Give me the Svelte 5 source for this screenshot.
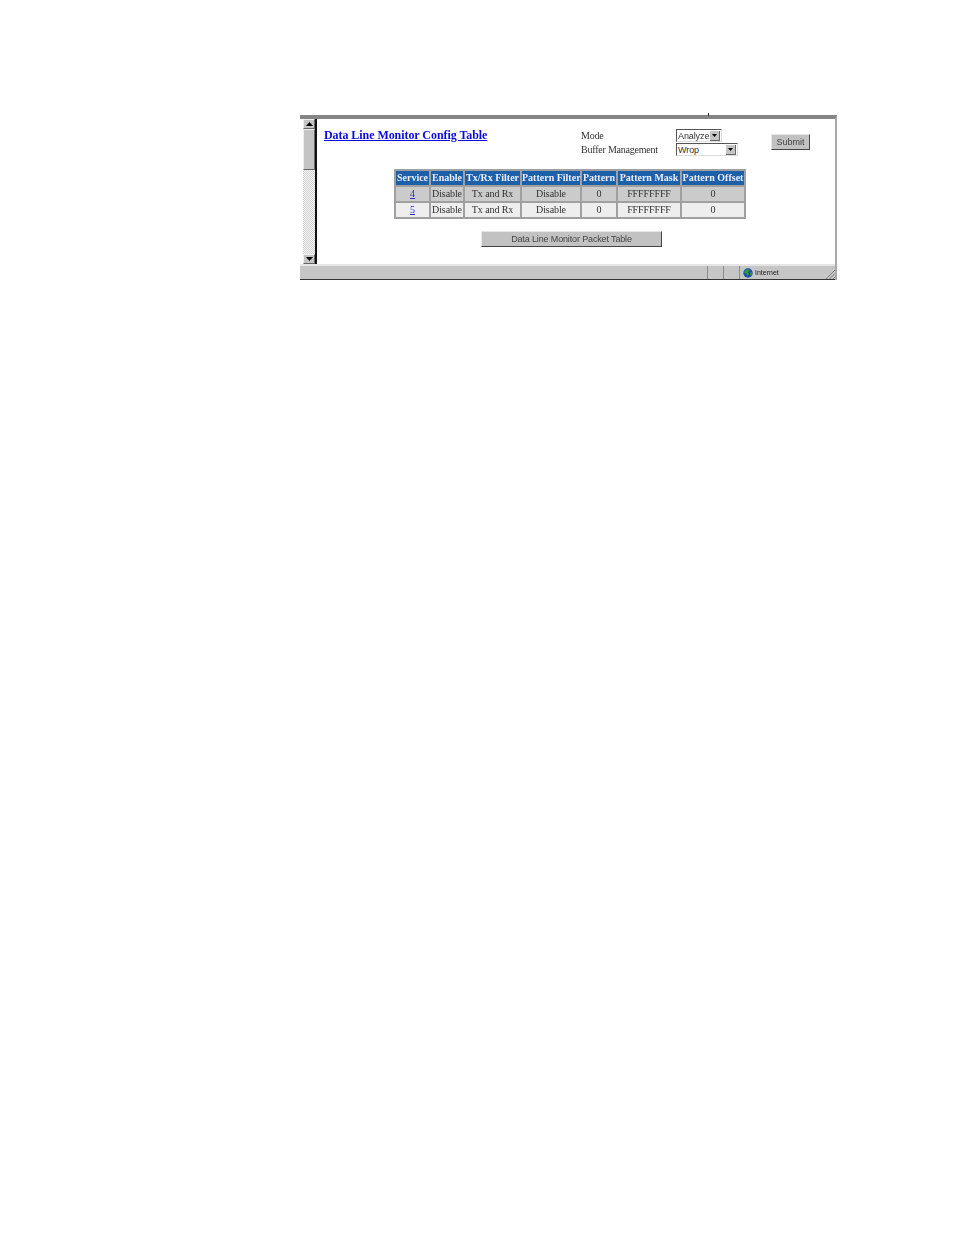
<script>
  const cols = [35, 34, 57, 60, 36, 64, 64];
  const heads = ["Service", "Enable", "Tx/Rx Filter", "Pattern Filter", "Pattern", "Pattern Mask", "Pattern Offset"];
  const rows = [
    { service: "4", cells: ["Disable", "Tx and Rx", "Disable", "0", "FFFFFFFF", "0"] },
    { service: "5", cells: ["Disable", "Tx and Rx", "Disable", "0", "FFFFFFFF", "0"] },
  ];
</script>

<div class="page">
  <div class="window">
    <span class="tick"></span>
    <div class="main">
      <div class="scroll">
        <div class="sbtn">
          <svg width="7" height="4" viewBox="0 0 7 4"><path d="M3.5 0 7 4H0z" fill="#000" /></svg>
        </div>
        <div class="thumb"></div>
        <div class="track"></div>
        <div class="sbtn">
          <svg width="7" height="4" viewBox="0 0 7 4"><path d="M0 0h7L3.500 4z" fill="#000" /></svg>
        </div>
      </div>

      <div class="content">
        <div class="top">
          <a class="title" href="#top">Data Line Monitor Config Table</a>
          <div class="labels">
            <div>Mode</div>
            <div>Buffer Management</div>
          </div>
          <div class="selects">
            <div class="select analyze">
              <span>Analyze</span>
              <i><svg width="5" height="3" viewBox="0 0 5 3"><path d="M0 0h5L2.500 3z" fill="#000" /></svg></i>
            </div>
            <div class="select wrap">
              <span>Wrop</span>
              <i><svg width="5" height="3" viewBox="0 0 5 3"><path d="M0 0h5L2.500 3z" fill="#000" /></svg></i>
            </div>
          </div>
          <button class="submit">Submit</button>
        </div>

        <table>
          <colgroup>
            {#each cols as w}
              <col style="width: {w}px" />
            {/each}
          </colgroup>
          <thead>
            <tr>
              {#each heads as h}
                <th>{h}</th>
              {/each}
            </tr>
          </thead>
          <tbody>
            {#each rows as row, i}
              <tr class={i % 2 ? "even" : "odd"}>
                <td><a href="#top">{row.service}</a></td>
                {#each row.cells as c}
                  <td>{c}</td>
                {/each}
              </tr>
            {/each}
          </tbody>
        </table>

        <button class="packet">Data Line Monitor Packet Table</button>
      </div>
    </div>

    <div class="status">
      <div class="st wide"></div>
      <div class="st small"></div>
      <div class="st small"></div>
      <div class="st zone">
        <svg width="10" height="10" viewBox="0 0 10 10">
          <circle cx="5" cy="5" r="4.700" fill="#1c4fa8" />
          <path d="M2 2.500 5 1l1.500 1.500L5 4.500 6 6 4.500 8.500 3.500 6 1 4.500zM7 5l2-1 .3 2L7.500 8z" fill="#2f9a35" />
        </svg>
        <span>Internet</span>
      </div>
      <svg class="grip" width="10" height="10" viewBox="0 0 10 10">
        <path d="M1 10 10 1M4.500 10 10 4.500M8 10l2-2" stroke="#7d7d7d" fill="none" />
      </svg>
    </div>
  </div>
</div>

<style>
  :global(body) {
    background: #fff;
  }
  .page {
    height: 1235px;
    box-sizing: border-box;
    padding: 115px 0 0 300px;
  }
  .window {
    position: relative;
    width: 537px;
    box-sizing: border-box;
    border-top: 4px solid #858585;
    border-right: 2px solid #a8a8a8;
    filter: blur(0.3px);
  }
  .tick {
    position: absolute;
    left: 408px;
    top: -6px;
    width: 1px;
    height: 3px;
    background: #222;
  }
  .main {
    display: flex;
    height: 145px;
  }
  .scroll {
    width: 12px;
    margin-left: 3px;
    display: flex;
    flex-direction: column;
    border-right: 2px solid #111;
  }
  .sbtn {
    height: 10px;
    display: flex;
    align-items: center;
    justify-content: center;
    background: #c4c4c4;
    border-top: 1px solid #eee;
    border-left: 1px solid #eee;
    border-right: 1px solid #666;
    border-bottom: 1px solid #666;
    box-sizing: border-box;
  }
  .thumb {
    height: 41px;
    background: #c4c4c4;
    border-top: 1px solid #eee;
    border-left: 1px solid #eee;
    border-right: 1px solid #666;
    border-bottom: 1px solid #666;
    box-sizing: border-box;
  }
  .track {
    flex: 1;
    background: repeating-conic-gradient(#d2d2d2 0 25%, #f4f4f4 0 50%) 0 0 / 2px 2px;
  }
  .content {
    flex: 1;
    padding-top: 10px;
    font-family: "Liberation Serif", serif;
    font-size: 10px;
    color: #333;
  }
  .top {
    display: flex;
    align-items: flex-start;
    padding-left: 7px;
  }
  .title {
    width: 257px;
    margin-top: -1px;
    font-size: 12px;
    line-height: 14px;
    font-weight: bold;
    letter-spacing: -0.06px;
    color: #0a0ae0;
  }
  .labels {
    width: 95px;
    line-height: 14px;
    letter-spacing: -0.22px;
  }
  .selects {
    width: 95px;
    display: flex;
    flex-direction: column;
    align-items: flex-start;
    gap: 1px;
  }
  .select {
    height: 13px;
    box-sizing: border-box;
    display: flex;
    justify-content: space-between;
    align-items: center;
    padding: 0 1px 0 1px;
    background: #fff;
    border-top: 1px solid #555;
    border-left: 1px solid #555;
    border-right: 1px solid #ddd;
    border-bottom: 1px solid #ddd;
    font-family: "Liberation Sans", sans-serif;
    font-size: 9px;
    letter-spacing: -0.1px;
  }
  .analyze {
    width: 46px;
  }
  .wrap {
    width: 62px;
  }
  .select i {
    width: 10px;
    height: 10px;
    display: flex;
    align-items: center;
    justify-content: center;
    background: #c4c4c4;
    border-right: 1px solid #666;
    border-bottom: 1px solid #666;
    box-sizing: border-box;
  }
  button {
    padding: 0;
    background: #c3c2c3;
    border-style: solid;
    border-width: 1px;
    border-color: #e6e6e6 #444 #444 #e6e6e6;
    font-family: "Liberation Sans", sans-serif;
    font-size: 9px;
    color: #444;
  }
  .submit {
    width: 39px;
    height: 16px;
    margin-top: 5px;
  }
  table {
    margin: 12px 0 0 77px;
    width: 350px;
    table-layout: fixed;
    border-collapse: collapse;
    text-align: center;
  }
  th {
    height: 16px;
    padding: 0 0 2px;
    box-sizing: border-box;
    background: #1c60aa;
    color: #eef;
    border: 2px solid #a0a0a0;
    font-size: 10px;
    white-space: nowrap;
  }
  td {
    height: 16px;
    padding: 0 0 2px;
    box-sizing: border-box;
    border: 2px solid #a0a0a0;
    white-space: nowrap;
    letter-spacing: -0.1px;
  }
  .odd td {
    background: #cbcbcb;
  }
  .even td {
    background: #eeeeee;
  }
  td a {
    color: #2a2ae0;
  }
  .packet {
    display: block;
    width: 181px;
    height: 16px;
    margin: 12px 0 0 164px;
    letter-spacing: -0.14px;
  }
  .status {
    display: flex;
    height: 16px;
    box-sizing: border-box;
    border-top: 2px solid #e4e4e4;
    border-bottom: 1px solid #333;
    background: #c6c6c6;
    position: relative;
  }
  .st {
    box-sizing: border-box;
    border-right: 1px solid #8c8c8c;
  }
  .wide {
    width: 408px;
  }
  .small {
    width: 16px;
  }
  .zone {
    flex: 1;
    display: flex;
    align-items: center;
    gap: 2px;
    padding-left: 3px;
    border-right: 0;
    font-family: "Liberation Sans", sans-serif;
    font-size: 7px;
    color: #222;
  }
  .grip {
    position: absolute;
    right: 0;
    bottom: 0;
  }
</style>
